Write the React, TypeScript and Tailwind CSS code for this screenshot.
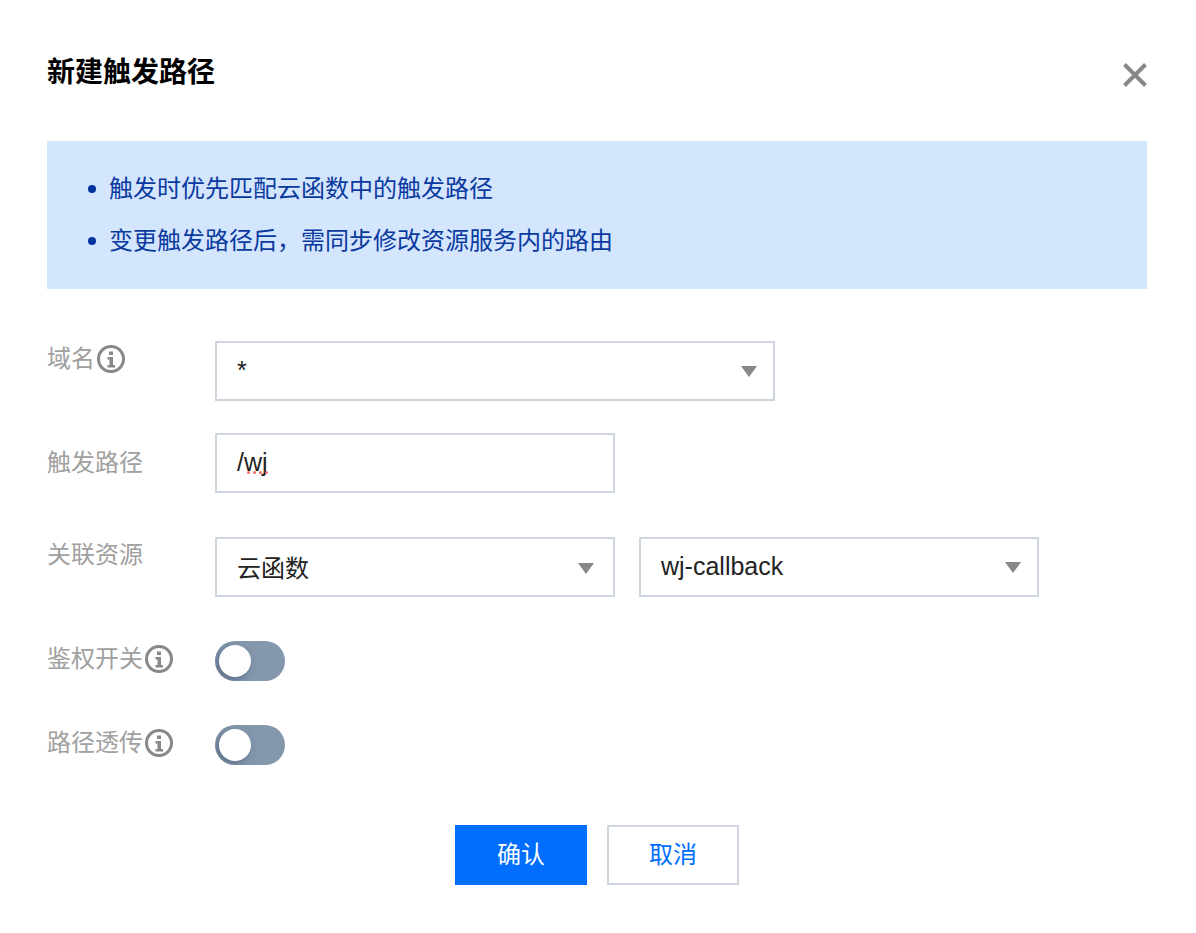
const font = "font-['Liberation_Sans','Noto_Sans_CJK_SC',sans-serif]";

function InfoIcon() {
  return (
    <svg width="28" height="28" viewBox="0 0 28 28" className="ml-[2px] shrink-0">
      <circle cx="14" cy="14" r="12.5" fill="none" stroke="#888888" strokeWidth="3" />
      <rect x="12" y="6.5" width="4" height="3.500" fill="#888888" />
      <path d="M10.5 12h5.500v8h2v2.500h-7.500v-2.500h2v-5.500h-2z" fill="#888888" />
    </svg>
  );
}

function CloseIcon() {
  return (
    <svg width="24" height="24" viewBox="0 0 24 24" className="mt-[13px] shrink-0">
      <path d="M1.500 1.500L22.500 22.500M22.500 1.500L1.500 22.500" stroke="#888888" strokeWidth="4" fill="none" />
    </svg>
  );
}

function Caret() {
  return (
    <svg width="16" height="11" viewBox="0 0 16 11" className="shrink-0">
      <path d="M0 0h16l-8 11z" fill="#888888" />
    </svg>
  );
}

function Select({ value, className }: { value: string; className: string }) {
  return (
    <div className={`flex h-[60px] items-center justify-between border-2 border-[#cfd5de] bg-white pl-[20px] text-[#222222] ${className}`}>
      <span>{value}</span>
      <Caret />
    </div>
  );
}

function Toggle() {
  return (
    <div className="relative h-10 w-[70px] overflow-hidden rounded-full bg-[#8497ad]">
      <div className="absolute left-[4px] top-[4px] h-8 w-8 rounded-full bg-white shadow-[-3px_3px_8px_rgba(60,75,100,0.55)]" />
    </div>
  );
}

function Row({ label, info, children, className, labelClass }: { label: string; info?: boolean; children: React.ReactNode; className?: string; labelClass?: string }) {
  return (
    <div className={`flex items-start ${className ?? ""}`}>
      <div className={`flex w-[168px] shrink-0 items-center text-[24px] text-[#a0a0a0] ${labelClass ?? "h-9"}`}>
        {label}
        {info && <InfoIcon />}
      </div>
      {children}
    </div>
  );
}

export default function App() {
  return (
    <div className={`h-[933px] w-[1196px] overflow-hidden bg-white pl-[47px] pr-[49px] ${font}`}>
      <div className="flex h-[141px] items-start justify-between pt-[50px]">
        <h1 className="mt-[2px] text-[28px] font-bold leading-[42px] text-black">新建触发路径</h1>
        <CloseIcon />
      </div>

      <div className="flex h-[148px] flex-col gap-[16px] bg-[#d4e5fe] pl-[41px] pt-[30px] text-[24px] leading-[36px] text-[#0a3a9e]">
        <div className="flex items-center gap-[13px]">
          <span className="h-2 w-2 rounded-full bg-[#00349e]" />
          触发时优先匹配云函数中的触发路径
        </div>
        <div className="flex items-center gap-[13px]">
          <span className="h-2 w-2 rounded-full bg-[#00349e]" />
          变更触发路径后，需同步修改资源服务内的路由
        </div>
      </div>

      <Row label="域名" info className="mt-[52px]">
        <Select value="*" className="w-[560px] pr-[16px] text-[25px]" />
      </Row>

      <Row label="触发路径" className="mt-[32px]" labelClass="h-[60px]">
        <div className="flex h-[60px] w-[400px] items-center border-2 border-[#cfd5de] bg-white pl-[20px] text-[25px] text-[#222222]">
          <span className="relative">
            /wj
            <span className="absolute left-[10px] top-[27px] z-10 flex gap-[3px]">
              <span className="h-[3px] w-[3px] rounded-full bg-[#f26a6a]" />
              <span className="h-[3px] w-[3px] rounded-full bg-[#f26a6a]" />
              <span className="h-[3px] w-[3px] rounded-full bg-[#f26a6a]" />
              <span className="h-[3px] w-[3px] rounded-full bg-[#f26a6a]" />
            </span>
          </span>
        </div>
      </Row>

      <Row label="关联资源" className="mt-[44px]">
        <div className="flex gap-6">
          <Select value="云函数" className="w-[400px] pr-[19px] pt-[3px] text-[24px]" />
          <Select value="wj-callback" className="w-[400px] pr-[16px] text-[25px]" />
        </div>
      </Row>

      <Row label="鉴权开关" info className="mt-[44px]">
        <Toggle />
      </Row>

      <Row label="路径透传" info className="mt-[44px]">
        <Toggle />
      </Row>

      <div className="mt-[60px] flex justify-center gap-5">
        <button className="h-[60px] w-[132px] bg-[#006eff] text-[24px] text-white">确认</button>
        <button className="h-[60px] w-[132px] border-2 border-[#cfd5de] bg-white text-[24px] text-[#006eff]">取消</button>
      </div>
    </div>
  );
}
